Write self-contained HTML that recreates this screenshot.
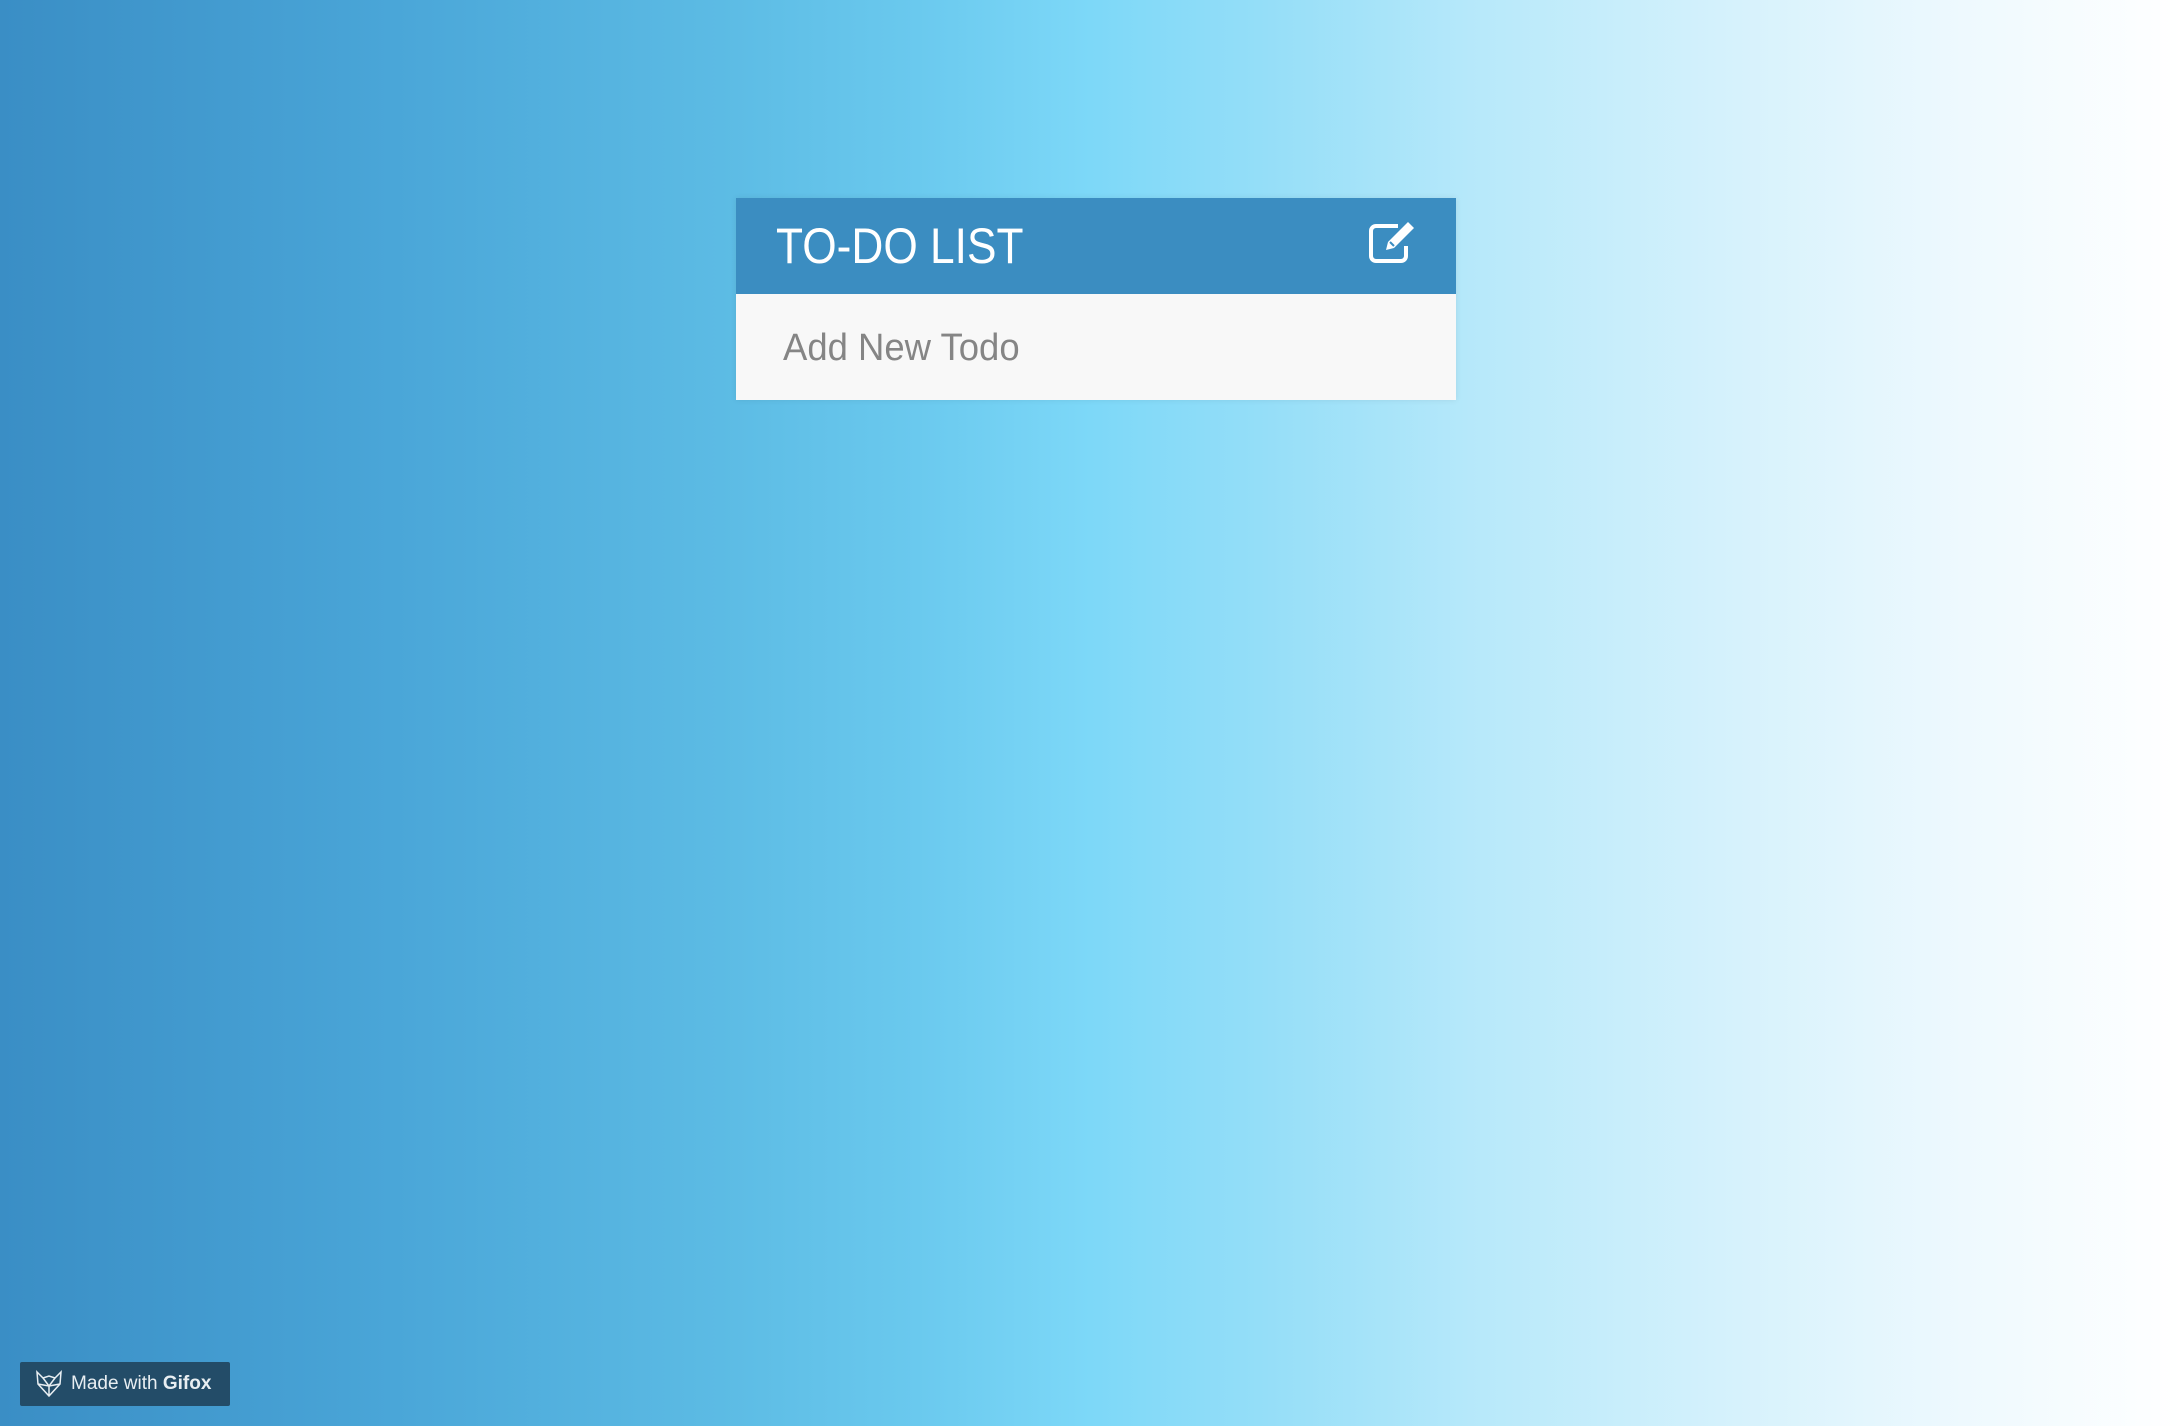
<!DOCTYPE html>
<html><head><meta charset="utf-8">
<style>
html,body{margin:0;padding:0;width:2182px;height:1426px;overflow:hidden;}
body{background:linear-gradient(90deg,#3a8ec5 0%,#4aa6d8 18%,#5cbbe4 33%,#6ac9ee 42%,#7dd8f8 50%,#95def8 58%,#b8e9fa 68%,#d7f2fc 80%,#eef9fe 90%,#ffffff 100%);font-family:"Liberation Sans",sans-serif;position:relative;}
.card{position:absolute;left:736px;top:198px;width:720px;box-shadow:0 0 6px rgba(0,0,0,0.08);}
.hd{height:96px;background:#3b8dc1;position:relative;}
.hd h1{margin:0;position:absolute;left:40px;top:20px;font-weight:normal;color:#fff;font-size:50px;line-height:56px;transform:scaleX(0.885);transform-origin:0 0;white-space:nowrap;}
.hd svg{position:absolute;left:632px;top:22px;}
.bd{height:106px;background:#f8f8f8;position:relative;}
.bd span{position:absolute;left:47px;top:31px;font-size:38px;color:#858585;line-height:46px;transform:scaleX(0.96);transform-origin:0 0;white-space:nowrap;}
.badge{position:absolute;left:20px;top:1362px;width:210px;height:44px;background:#234c68;border-radius:2px;color:#e8eef2;font-size:19px;}
.badge span{position:absolute;left:51px;top:11px;}
.badge svg{position:absolute;left:14px;top:8px;}
</style></head><body>
<div class="card">
<div class="hd"><h1>TO-DO LIST</h1>
<svg width="50" height="44" viewBox="0 0 50 44"><path d="M30 6 H8 a5 5 0 0 0 -5 5 v25 a5 5 0 0 0 5 5 h25 a5 5 0 0 0 5 -5 v-10" fill="none" stroke="#fff" stroke-width="4"/><path d="M40 2 l6 6 l-20 20 l-8 2 l2 -8 z" fill="#fff"/><path d="M22 22 l4 4" stroke="#3b8dc1" stroke-width="2"/></svg>
</div>
<div class="bd"><span>Add New Todo</span></div>
</div>
<div class="badge"><svg width="30" height="28" viewBox="0 0 30 28" fill="none" stroke="#e8eef2" stroke-width="1.5"><path d="M3 2 L9 8 L15 6 L21 8 L27 2 L26 14 L15 26 L4 14 Z M9 8 L15 16 L21 8 M4 14 L15 16 L26 14 M15 16 L15 26"/></svg><span>Made with <b>Gifox</b></span></div>
</body></html>
